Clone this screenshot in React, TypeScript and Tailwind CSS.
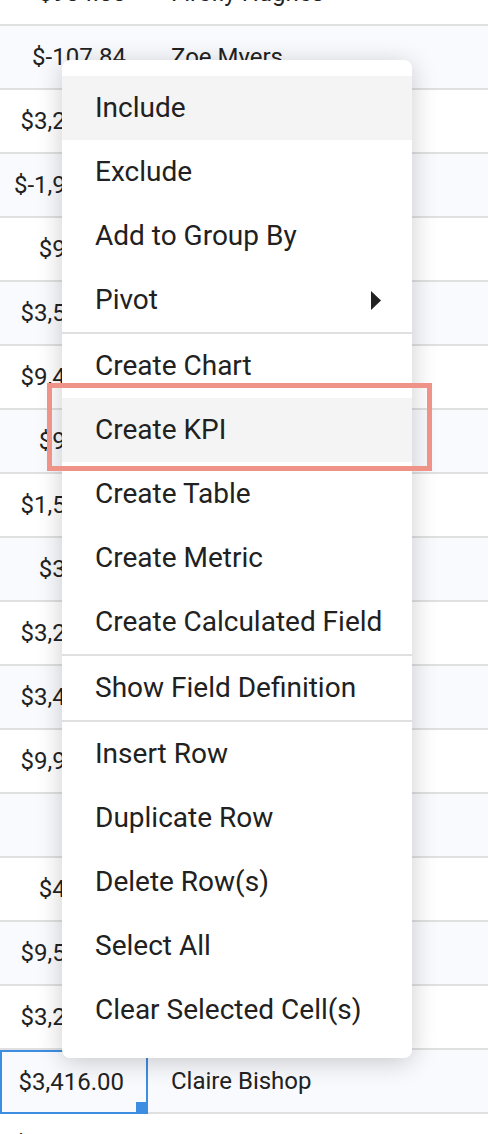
import { Fragment } from "react";

type Row = { amount: string; name: string };

const rows: Row[] = [
  { amount: "$904.00", name: "Firefly Hughes" },
  { amount: "$-107.84", name: "Zoe Myers" },
  { amount: "$3,287.19", name: "Owen Carter" },
  { amount: "$-1,942.30", name: "Maya Brooks" },
  { amount: "$951.62", name: "Leo Grant" },
  { amount: "$3,518.44", name: "Ivy Foster" },
  { amount: "$9,406.77", name: "Noah Reed" },
  { amount: "$973.05", name: "Ella Price" },
  { amount: "$1,562.90", name: "Jack Turner" },
  { amount: "$384.21", name: "Ruby Hayes" },
  { amount: "$3,245.60", name: "Liam Ward" },
  { amount: "$3,491.08", name: "Aria Cole" },
  { amount: "$9,927.35", name: "Mason Gray" },
  { amount: "", name: "" },
  { amount: "$482.13", name: "Chloe Bell" },
  { amount: "$9,534.70", name: "Ethan Ross" },
  { amount: "$3,209.88", name: "Nora Lane" },
  { amount: "$3,416.00", name: "Claire Bishop" },
  { amount: "$-2,318.40", name: "Henry Wells" },
];

const SELECTED = 17;

type MenuEntry = { label: string; active?: boolean; submenu?: boolean } | "divider";

const menu: MenuEntry[] = [
  { label: "Include", active: true },
  { label: "Exclude" },
  { label: "Add to Group By" },
  { label: "Pivot", submenu: true },
  "divider",
  { label: "Create Chart" },
  { label: "Create KPI", active: true },
  { label: "Create Table" },
  { label: "Create Metric" },
  { label: "Create Calculated Field" },
  "divider",
  { label: "Show Field Definition" },
  "divider",
  { label: "Insert Row" },
  { label: "Duplicate Row" },
  { label: "Delete Row(s)" },
  { label: "Select All" },
  { label: "Clear Selected Cell(s)" },
];

export default function App() {
  return (
    <div
      className="relative w-[488px] h-[1134px] overflow-hidden bg-white text-[#222222]"
      style={{ fontFamily: "Roboto, 'Liberation Sans', sans-serif" }}
    >
      {/* Data grid */}
      <div className="-mt-[38px]">
        {rows.map((row, i) => (
          <div
            key={i}
            className={`flex h-[64px] border-b-2 border-[#e0e0e0] text-[24px] whitespace-nowrap ${
              i % 2 === 1 ? "bg-[#f9fafd]" : "bg-white"
            }`}
          >
            <div
              className={`relative w-[148px] flex items-center justify-end pr-[22px] ${
                i === SELECTED ? "border-2 border-[#3d8de3] -mb-[2px]" : ""
              }`}
            >
              {row.amount}
              {i === SELECTED && (
                <span className="absolute right-[-2px] bottom-[-2px] w-[12px] h-[12px] bg-[#3d8de3]" />
              )}
            </div>
            <div className="flex items-center pl-[23px]">{row.name}</div>
          </div>
        ))}
      </div>

      {/* Context menu */}
      <div className="absolute left-[62px] top-[60px] w-[350px] py-4 bg-white rounded-lg shadow-[0_4px_26px_rgba(0,0,0,0.2)] text-[28px] text-[#212121] whitespace-nowrap">
        {menu.map((entry, i) =>
          entry === "divider" ? (
            <div key={i} className="h-[2px] bg-[#e0e0e0]" />
          ) : (
            <Fragment key={i}>
              <div
                className={`flex items-center justify-between h-[64px] pl-[33px] pr-[31px] ${
                  entry.active ? "bg-[#f4f4f4]" : ""
                }`}
              >
                <span>{entry.label}</span>
                {entry.submenu && (
                  <svg width="10" height="19" viewBox="0 0 10 19">
                    <path d="M0 0 L10 9.5 L0 19 Z" fill="#222222" />
                  </svg>
                )}
              </div>
            </Fragment>
          )
        )}
      </div>

      {/* Annotation highlight */}
      <div className="absolute left-[47px] top-[383px] w-[385px] h-[88px] border-[5px] border-[#ef9389]" />
    </div>
  );
}
